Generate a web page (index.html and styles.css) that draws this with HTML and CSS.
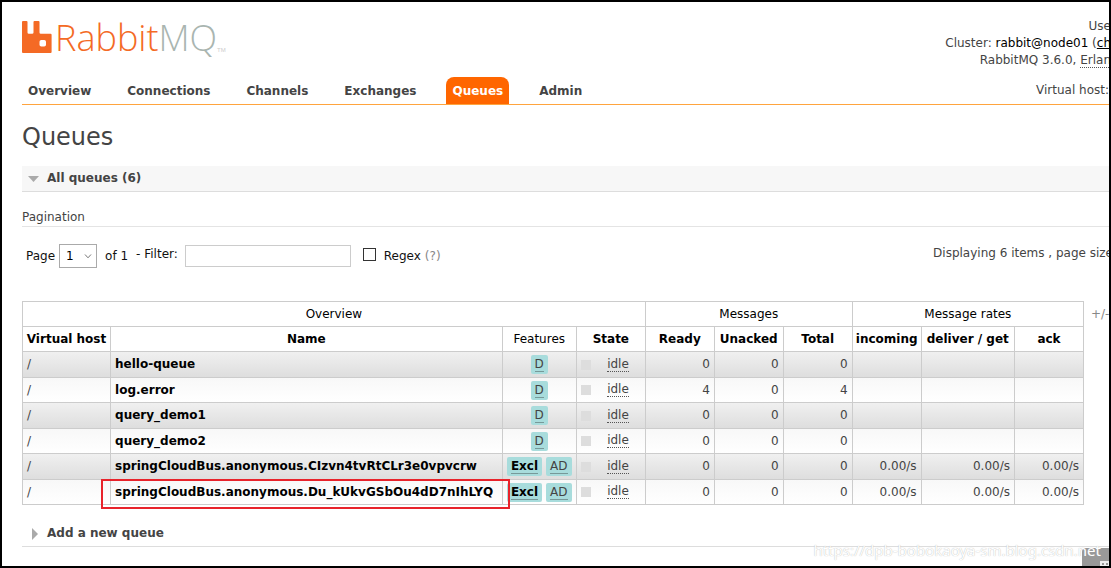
FILE: index.html
```html
<!DOCTYPE html>
<html lang="en">
<head>
<meta charset="utf-8">
<title>RabbitMQ Management</title>
<link rel="stylesheet" href="styles.css">
</head>
<body>
<div class="page">
  <header class="header">
    <a class="logo" href="#">
      <svg class="logo-mark" viewBox="0 0 30 32" width="30" height="32" aria-hidden="true">
        <path fill="#f46a25" fill-rule="evenodd" d="M1 0H4.500Q5.500 0 5.500 1V11.500Q5.500 12.800 6.800 12.800H10.200Q11.500 12.800 11.500 11.500V1Q11.500 0 12.500 0H16.500Q17.500 0 17.500 1V11.500Q17.500 12.800 18.800 12.800H28.600Q29.600 12.800 29.600 13.800V31Q29.600 32 28.600 32H1Q0 32 0 31V1Q0 0 1 0ZM19.300 19Q17.500 19 17.500 20.800V23.700Q17.500 25.500 19.300 25.500H22.200Q24 25.500 24 23.700V20.800Q24 19 22.200 19Z"/>
      </svg>
      <span class="logo-text">Rabbit<span class="logo-mq">MQ</span></span><span class="logo-tm">TM</span>
    </a>
    <div class="status">
      <div>Use</div>
      <div>Cluster: <b>rabbit@node01</b> (<a href="#">ch</a></div>
      <div>RabbitMQ 3.6.0, <abbr>Erlan</abbr></div>
    </div>
  </header>
  <nav class="nav">
    <ul class="tabs">
      <li><a href="#">Overview</a></li>
      <li><a href="#">Connections</a></li>
      <li><a href="#">Channels</a></li>
      <li><a href="#">Exchanges</a></li>
      <li><a class="selected" href="#">Queues</a></li>
      <li><a href="#">Admin</a></li>
    </ul>
    <span class="vhost">Virtual host:</span>
  </nav>
  <main class="main">
    <h1>Queues</h1>
    <h2 class="section open"><svg width="12" height="12" viewBox="0 0 12 12" aria-hidden="true"><path d="M0 3H11L5.500 9Z" fill="#aaa"/></svg>All queues (6)</h2>
    <h3>Pagination</h3>
    <div class="paging">
      <label for="page">Page</label>
      <span class="select"><select id="page"><option>1</option></select><svg width="8" height="5" viewBox="0 0 8 5" aria-hidden="true"><path d="M1 .5L4 3.800L7 .5" fill="none" stroke="#777"/></svg></span>
      <span class="of">of 1</span>
      <label class="filter" for="filter">- Filter:</label>
      <input id="filter" class="text" type="text">
      <input id="regex" class="check" type="checkbox">
      <label for="regex">Regex</label>
      <span class="help">(?)</span>
      <span class="showing">Displaying 6 items , page size</span>
    </div>
    <div class="table-row">
      <table>
        <colgroup><col class="c-host"><col class="c-name"><col class="c-feat"><col class="c-num"><col class="c-num"><col class="c-num"><col class="c-num"><col class="c-num"><col class="c-get"><col class="c-num"></colgroup>
        <thead>
          <tr><th class="plain" colspan="4">Overview</th><th class="plain" colspan="3">Messages</th><th class="plain" colspan="3">Message rates</th></tr>
          <tr><th>Virtual host</th><th>Name</th><th class="plain">Features</th><th>State</th><th>Ready</th><th>Unacked</th><th>Total</th><th>incoming</th><th>deliver / get</th><th>ack</th></tr>
        </thead>
        <tbody>
          <tr><td>/</td><td><a href="#">hello-queue</a></td><td class="feat"><span class="tag"><abbr>D</abbr></span></td><td><div class="state"><i></i><abbr>idle</abbr></div></td><td class="n">0</td><td class="n">0</td><td class="n">0</td><td></td><td></td><td></td></tr>
          <tr><td>/</td><td><a href="#">log.error</a></td><td class="feat"><span class="tag"><abbr>D</abbr></span></td><td><div class="state"><i></i><abbr>idle</abbr></div></td><td class="n">4</td><td class="n">0</td><td class="n">4</td><td></td><td></td><td></td></tr>
          <tr><td>/</td><td><a href="#">query_demo1</a></td><td class="feat"><span class="tag"><abbr>D</abbr></span></td><td><div class="state"><i></i><abbr>idle</abbr></div></td><td class="n">0</td><td class="n">0</td><td class="n">0</td><td></td><td></td><td></td></tr>
          <tr><td>/</td><td><a href="#">query_demo2</a></td><td class="feat"><span class="tag"><abbr>D</abbr></span></td><td><div class="state"><i></i><abbr>idle</abbr></div></td><td class="n">0</td><td class="n">0</td><td class="n">0</td><td></td><td></td><td></td></tr>
          <tr><td>/</td><td><a href="#">springCloudBus.anonymous.CIzvn4tvRtCLr3e0vpvcrw</a></td><td class="feat"><span class="tag excl"><abbr>Excl</abbr></span><span class="tag"><abbr>AD</abbr></span></td><td><div class="state"><i></i><abbr>idle</abbr></div></td><td class="n">0</td><td class="n">0</td><td class="n">0</td><td class="n">0.00/s</td><td class="n">0.00/s</td><td class="n">0.00/s</td></tr>
          <tr><td>/</td><td class="marked"><a href="#">springCloudBus.anonymous.Du_kUkvGSbOu4dD7nIhLYQ</a></td><td class="feat"><span class="tag excl"><abbr>Excl</abbr></span><span class="tag"><abbr>AD</abbr></span></td><td><div class="state"><i></i><abbr>idle</abbr></div></td><td class="n">0</td><td class="n">0</td><td class="n">0</td><td class="n">0.00/s</td><td class="n">0.00/s</td><td class="n">0.00/s</td></tr>
        </tbody>
      </table>
      <span class="columns">+/-</span>
    </div>
    <h2 class="section"><svg width="12" height="12" viewBox="0 0 12 12" aria-hidden="true"><path d="M4 0V12L10 6Z" fill="#aaa"/></svg>Add a new queue</h2>
  </main>
  <div class="corner"><svg width="9" height="5" viewBox="0 0 9 5" aria-hidden="true"><path d="M0 0H9V5H0ZM2 2H4V4H2ZM6 2H8V4H6Z" fill="#eee" fill-rule="evenodd"/></svg></div>
  <div class="watermark">https://dpb-bobokaoya-sm.blog.csdn.net</div>
</div>
</body>
</html>
```
FILE: styles.css
```css
* { box-sizing: border-box; }
body { margin: 0; background: #fff; color: #444; font: 12px/17px Verdana, "DejaVu Sans", sans-serif; }
.page { position: relative; min-height: 100vh; border: 2px solid #000; padding-left: 20px; overflow: hidden; }
a { color: inherit; }
abbr { text-decoration: none; border-bottom: 1px dotted #555; }
.header { display: flex; justify-content: space-between; height: 75px; padding-top: 16px; }
.logo { display: flex; align-items: flex-start; padding-top: 3px; text-decoration: none; }
.logo-text { margin-left: 3px; color: #f46a25; font: 300 36px/33px "Liberation Sans Narrow", "Open Sans", sans-serif; }
.logo-mq { color: #a9b5b0; }
.logo-tm { align-self: flex-start; padding-top: 25px; color: #ccc; font: 6px/8px "Liberation Sans", sans-serif; }
.status { margin-right: -2px; text-align: right; white-space: nowrap; }
.status b { color: #000; font-weight: normal; }
.status a { color: #000; }
.nav { display: flex; justify-content: space-between; border-bottom: 1px solid #ffa43e; }
.tabs { display: flex; gap: 24px; margin: 0; padding: 0; list-style: none; }
.tabs a { display: block; padding: 5px 6px 4px; border-radius: 8px 8px 0 0; font-weight: bold; line-height: 18px; text-decoration: none; }
.tabs .selected { background: #f60; color: #fff; }
.vhost { padding-top: 5px; white-space: nowrap; }
h1 { margin: 17px 0 13px; font-size: 24px; font-weight: normal; line-height: 31px; }
.section { display: flex; align-items: center; gap: 7px; margin: 0; padding: 4px 6px; border-bottom: 1px solid #ddd; font-size: 12px; font-weight: bold; line-height: 17px; }
.open { background: #f7f7f7; }
h3 { margin: 16px 0 0; border-bottom: 1px solid #e4e4e4; font-size: 12px; font-weight: normal; line-height: 18px; }
.paging { display: flex; align-items: center; gap: 4px; margin: 17px 0 33px; padding-left: 4px; color: #111; white-space: nowrap; }
.select { position: relative; display: block; }
.select select { display: block; width: 38px; height: 24px; padding: 0 6px; appearance: none; border: 1px solid #aaa; border-radius: 0; background: #fff; color: #000; font: inherit; }
.select svg { position: absolute; right: 5px; top: 10px; }
.of { padding: 0 4px; }
.filter { padding: 0 3px 4px 0; }
.text { width: 166px; height: 22px; border: 1px solid #ccc; }
.check { width: 13px; height: 13px; margin: 0 4px 3px 8px; appearance: none; border: 1px solid #333; background: #fff; }
.help { color: #888; }
.showing { margin: 0 -4px 0 auto; padding-bottom: 6px; color: #444; }
.table-row { display: flex; align-items: flex-start; gap: 7px; }
table { flex: 1; width: 100%; table-layout: fixed; border-collapse: collapse; }
.c-host { width: 8.3%; }
.c-name { width: 36.9%; }
.c-feat { width: 7%; }
.c-num { width: 6.500%; }
.c-get { width: 8.800%; }
th, td { height: 25px; padding: 0 4px; border: 1px solid #ccc; white-space: nowrap; text-align: left; }
th { padding: 0; color: #000; text-align: center; }
.plain { font-weight: normal; }
tbody tr { background: linear-gradient(#f8f8f8, #fff); }
tbody tr:nth-child(odd) { background: linear-gradient(#f0f0f0, #ddd); }
tbody tr:nth-child(odd) td { height: 26px; }
td a { color: #000; font-weight: bold; text-decoration: none; }
.n { text-align: right; }
td.feat { padding: 0; text-align: center; }
.tag { display: inline-block; padding: 1px 4px; border-radius: 2px; background: #a8dcdc; line-height: 17px; }
.tag abbr { border-bottom: 1px solid #799; }
.tag + .tag { margin-left: 4px; }
.excl { color: #000; font-weight: bold; }
.state { display: flex; align-items: center; justify-content: space-between; padding-right: 12px; line-height: 13px; }
.state i { width: 10px; height: 10px; background: #ddd; }
.marked { position: relative; }
.marked::after { content: ""; position: absolute; inset: -1px -8px -5px -10px; border: 2px solid #e8232b; }
.columns { flex: none; width: 18px; padding-top: 5px; color: #888; white-space: nowrap; }
.table-row + .section { margin-top: 16px; }
.corner { position: absolute; right: 0; bottom: 0; display: flex; align-items: flex-end; justify-content: flex-end; width: 27px; height: 18px; border-top-left-radius: 4px; background: #999; }
.watermark { position: absolute; right: 8px; bottom: 6px; color: #fff; font: 15px/20px "Noto Sans", sans-serif; text-shadow: 0 0 1px #aaa; white-space: nowrap; }
```
